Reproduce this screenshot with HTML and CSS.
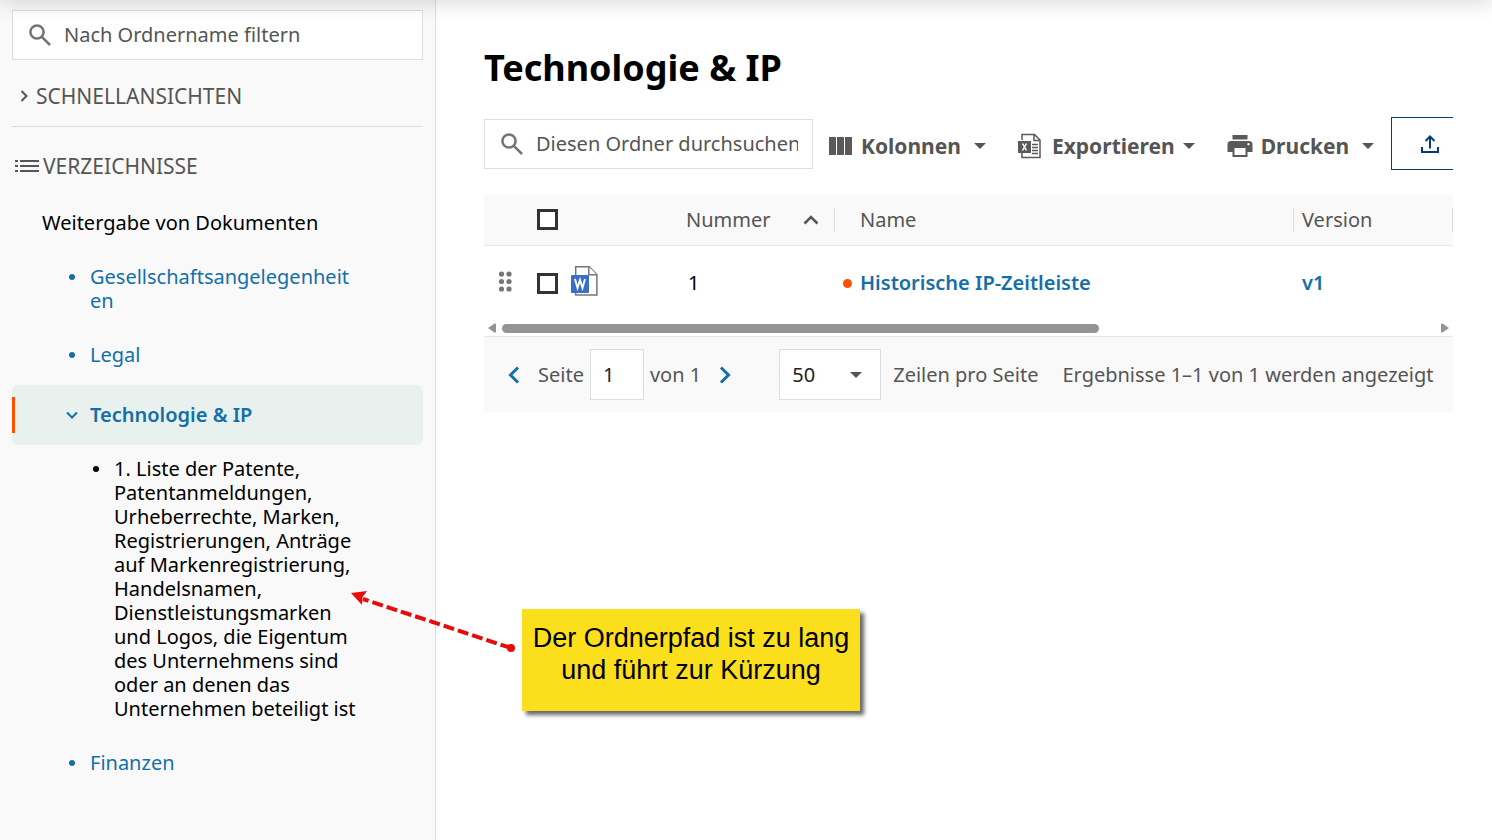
FILE: index.html
```html
<!DOCTYPE html>
<html lang="de">
<head>
    <meta charset="UTF-8">
    <meta name="viewport" content="width=device-width, initial-scale=1.0">
    <title>Technologie &amp; IP</title>
    <link rel="stylesheet" href="styles.css">
</head>
<body>
    <div class="top-shadow"></div>

    <aside class="sidebar">
        <div class="search">
            <svg class="search-icon" viewBox="0 0 24 24" aria-hidden="true"><circle cx="9" cy="9" r="6.6"/><path d="M13.8 13.8L22 22"/></svg>
            <input type="text" placeholder="Nach Ordnername filtern" aria-label="Nach Ordnername filtern">
        </div>

        <button type="button" class="section-title quick-views">
            <svg width="8" height="12" viewBox="0 0 8 12" aria-hidden="true"><path d="M1.5 1L6.5 6L1.5 11"/></svg>
            SCHNELLANSICHTEN
        </button>

        <h2 class="section-title folders-title">
            <svg width="24" height="14" viewBox="0 0 24 14" aria-hidden="true"><path d="M0 2h3M0 7h3M0 12h3M5 2h19M5 7h19M5 12h19"/></svg>
            VERZEICHNISSE
        </h2>

        <nav class="folders">
            <div class="folder root">Weitergabe von Dokumenten</div>
            <ul>
                <li><a class="folder" href="#"><span class="marker"><i class="bullet"></i></span><span class="folder-name">Gesellschaftsangelegenheiten</span></a></li>
                <li><a class="folder" href="#"><span class="marker"><i class="bullet"></i></span><span class="folder-name">Legal</span></a></li>
                <li>
                    <a class="folder active" href="#"><span class="marker"><svg width="12" height="8" viewBox="0 0 12 8" aria-hidden="true"><path d="M1 1.5L6 6.5L11 1.5"/></svg></span><span class="folder-name">Technologie &amp; IP</span></a>
                    <ul>
                        <li><a class="folder nested" href="#"><span class="marker"><i class="bullet"></i></span><span class="folder-name">1. Liste der Patente, Patentanmeldungen, Urheberrechte, Marken, Registrierungen, Anträge auf Markenregistrierung, Handelsnamen, Dienstleistungsmarken und Logos, die Eigentum des Unternehmens sind oder an denen das Unternehmen beteiligt ist</span></a></li>
                    </ul>
                </li>
                <li><a class="folder" href="#"><span class="marker"><i class="bullet"></i></span><span class="folder-name">Finanzen</span></a></li>
            </ul>
        </nav>
    </aside>

    <main class="content">
        <h1>Technologie &amp; IP</h1>

        <div class="toolbar">
            <div class="search">
                <svg class="search-icon" viewBox="0 0 24 24" aria-hidden="true"><circle cx="9" cy="9" r="6.6"/><path d="M13.8 13.8L22 22"/></svg>
                <input type="text" placeholder="Diesen Ordner durchsuchen" aria-label="Diesen Ordner durchsuchen">
            </div>
            <button type="button" class="tool">
                <svg width="24" height="18" viewBox="0 0 24 18" aria-hidden="true"><path d="M0 0h7v18H0zM8 0h7v18H8zM16 0h7v18h-7z"/></svg>
                Kolonnen
                <span class="caret"></span>
            </button>
            <button type="button" class="tool export">
                <svg width="24" height="26" viewBox="0 0 24 26" aria-hidden="true">
                    <path class="line" d="M4 7V1.5h12.5L22 7v17.5H4V20M16 1.5V7.5h6M14 11.5h6M14 14.5h6M14 17.5h6M14 20.5h6"/>
                    <path d="M0 8h13v12H0z"/>
                    <path class="mark" d="M4.5 10.5l4 7M8.5 10.5l-4 7"/>
                </svg>
                Exportieren
                <span class="caret"></span>
            </button>
            <button type="button" class="tool">
                <svg width="26" height="22" viewBox="0 0 26 22" aria-hidden="true"><path fill-rule="evenodd" d="M5.5 0h15v4.5h-15zM4 6h18a3.5 3.5 0 0 1 3.5 3.5V17H20.5v5h-15v-5H.5V9.5A3.5 3.5 0 0 1 4 6zM7.5 13v7h11v-7zM21.5 8a1.2 1.2 0 1 0 .01 0z"/></svg>
                Drucken
                <span class="caret"></span>
            </button>
            <button type="button" class="upload" aria-label="Hochladen">
                <svg width="18" height="18" viewBox="0 0 18 18" aria-hidden="true"><path d="M1 12v5h16v-5M9 13.5V1.5M4.5 6L9 1.5L13.5 6"/></svg>
            </button>
        </div>

        <table class="documents">
            <thead>
                <tr>
                    <th class="col-select"><div class="row-tools"><span class="handle"></span><input type="checkbox" aria-label="Alle auswählen"></div></th>
                    <th class="col-number"><div class="head">Nummer <svg width="16" height="10" viewBox="0 0 16 10" aria-hidden="true"><path d="M1.5 8.5L8 2L14.5 8.5"/></svg></div></th>
                    <th class="col-name"><div class="head">Name</div></th>
                    <th class="col-version"><div class="head">Version</div></th>
                </tr>
            </thead>
            <tbody>
                <tr>
                    <td>
                        <div class="row-tools">
                            <svg class="handle" viewBox="0 0 42 21" aria-hidden="true"><g fill="#757575"><circle cx="17.5" cy="3" r="2.6"/><circle cx="25" cy="3" r="2.6"/><circle cx="17.5" cy="10.5" r="2.6"/><circle cx="25" cy="10.5" r="2.6"/><circle cx="17.5" cy="18" r="2.6"/><circle cx="25" cy="18" r="2.6"/></g></svg>
                            <input type="checkbox" aria-label="Historische IP-Zeitleiste auswählen">
                            <svg width="27" height="30" viewBox="0 0 27 30" aria-hidden="true">
                                <path fill="#fff" stroke="#757575" stroke-width="1.5" d="M4.7 .8h13.5l7.7 7.7v20.6H4.7z"/>
                                <path fill="#fff" stroke="#757575" stroke-width="1.5" d="M17.8 .8v7.9h8.1"/>
                                <rect y="9" width="18" height="18" rx="1" fill="#3a6fc7"/>
                                <path fill="none" stroke="#fff" stroke-width="1.9" d="M4 13L6.5 22L9 14L11.5 22L14 13"/>
                            </svg>
                        </div>
                    </td>
                    <td class="number">1</td>
                    <td><div class="doc"><i class="new-dot"></i><a href="#">Historische IP-Zeitleiste</a></div></td>
                    <td class="version"><a href="#">v1</a></td>
                </tr>
            </tbody>
        </table>
        <div class="scrollbar">
            <svg width="8" height="10" viewBox="0 0 8 10" aria-hidden="true"><path d="M0 5L6.5 .5Q8 0 8 1.5v7Q8 10 6.5 9.5z"/></svg>
            <div class="track"><div class="thumb"></div></div>
            <svg width="8" height="10" viewBox="0 0 8 10" aria-hidden="true"><path d="M8 5L1.5 .5Q0 0 0 1.5v7Q0 10 1.5 9.5z"/></svg>
        </div>

        <div class="pager">
            <button type="button" class="page-arrow" aria-label="Vorherige Seite"><svg width="12" height="18" viewBox="0 0 12 18" aria-hidden="true"><path d="M10 1.5L2.5 9L10 16.5"/></svg></button>
            <label for="page">Seite</label>
            <input type="text" id="page" class="page-input" value="1">
            <span class="page-total">von 1</span>
            <button type="button" class="page-arrow" aria-label="Nächste Seite"><svg width="12" height="18" viewBox="0 0 12 18" aria-hidden="true"><path d="M2 1.5L9.5 9L2 16.5"/></svg></button>
            <div class="rows-select">
                <select id="rows"><option>50</option></select>
                <span class="caret"></span>
            </div>
            <label for="rows">Zeilen pro Seite</label>
            <span class="results">Ergebnisse 1–1 von 1 werden angezeigt</span>
        </div>
    </main>

    <!-- Hinweis -->
    <svg class="arrow" width="170" height="66" viewBox="0 0 170 66" aria-hidden="true">
        <path d="M161 57L13 8" fill="none" stroke="#ea0a0a" stroke-width="4" stroke-dasharray="11 4"/>
        <circle cx="161" cy="57" r="4" fill="#ea0a0a"/>
        <path d="M1 2L17 0L12.5 6L12 14z" fill="#ea0a0a"/>
    </svg>
    <div class="callout">Der Ordnerpfad ist zu lang und führt zur Kürzung</div>
</body>
</html>
```
FILE: styles.css
```css
* {
    box-sizing: border-box;
}
body {
    margin: 0;
    display: flex;
    min-height: 100vh;
    position: relative;
    background-color: #fff;
    color: #555;
    font-family: 'Noto Sans', sans-serif;
    font-size: 20px;
    line-height: 24px;
}
button, input, select {
    font: inherit;
    color: inherit;
}
button {
    padding: 0;
    border: none;
    background: none;
    cursor: pointer;
}
a {
    color: #146fa8;
    text-decoration: none;
}
svg {
    flex: none;
}
ul {
    margin: 0;
    padding: 0;
    list-style: none;
}
.top-shadow {
    position: absolute;
    top: -10px;
    left: 0;
    right: 0;
    height: 10px;
    box-shadow: 0 0 20px rgba(0, 0, 0, 0.25);
}

/* Search fields */
.search {
    display: flex;
    align-items: center;
    height: 50px;
    padding: 0 14px 0 15px;
    border: 1px solid #ddd;
    background-color: #fff;
}
.search-icon {
    width: 24px;
    height: 24px;
    fill: none;
    stroke: #757575;
    stroke-width: 2.5;
}
.search input {
    flex: 1;
    min-width: 0;
    margin-left: 12px;
    padding: 0;
    border: none;
    outline: none;
    background: none;
}
.search input::placeholder {
    color: #555;
    opacity: 1;
}

/* Sidebar */
.sidebar {
    flex: none;
    width: 436px;
    padding: 10px 12px;
    border-right: 1px solid #ddd;
    background-color: #f9f9f9;
}
.section-title {
    display: flex;
    align-items: center;
    width: 100%;
    margin: 0;
    font-size: 21px;
    font-weight: 400;
}
.section-title svg {
    fill: none;
    stroke: #555;
    stroke-width: 2;
}
.quick-views {
    gap: 8px;
    padding: 24px 8px 18px;
    border-bottom: 1px solid #ddd;
}
.folders-title {
    gap: 4px;
    padding: 27px 3px 21px;
}
.folder {
    display: flex;
    padding: 12px 68px 18px 48px;
}
.folder-name {
    flex: 1;
    min-width: 0;
    overflow-wrap: anywhere;
}
.marker {
    display: flex;
    align-items: center;
    justify-content: center;
    width: 24px;
    height: 24px;
    margin-right: 6px;
}
.marker svg {
    fill: none;
    stroke: #146fa8;
    stroke-width: 2;
}
.bullet {
    width: 6px;
    height: 6px;
    border-radius: 50%;
    background-color: currentColor;
}
.root {
    padding-left: 30px;
    color: #000;
}
.nested {
    padding-right: 60px;
    padding-left: 72px;
    color: #000;
}
.active {
    position: relative;
    padding-top: 18px;
    border-radius: 6px;
    background-color: #e8f1ee;
    font-weight: 600;
}
.active::before {
    content: '';
    position: absolute;
    left: 0;
    top: 12px;
    bottom: 12px;
    width: 3px;
    background-color: #ff4f00;
}

/* Content */
.content {
    flex: 1;
    min-width: 0;
    padding: 44px 39px 0 48px;
}
h1 {
    margin: 0;
    color: #000;
    font-size: 36px;
    line-height: 48px;
    font-weight: 700;
}
.toolbar {
    display: flex;
    align-items: center;
    gap: 32px;
    margin-top: 25px;
    overflow: hidden;
}
.toolbar .search {
    flex: none;
    width: 329px;
    margin-right: -16px;
}
.tool {
    display: flex;
    flex: none;
    align-items: center;
    gap: 8px;
    padding-top: 5px;
    font-size: 21px;
    font-weight: 700;
}
.tool svg {
    fill: #5a5a5a;
}
.tool svg .line {
    fill: none;
    stroke: #5a5a5a;
    stroke-width: 1.5;
}
.tool svg .mark {
    stroke: #fff;
    stroke-width: 1.5;
}
.caret {
    border: 6px solid transparent;
    border-top-color: #555;
    border-bottom: none;
}
.tool .caret {
    margin-left: 5px;
}
.export svg {
    margin-right: 2px;
}
.export .caret {
    margin-left: 0;
}
.upload {
    display: flex;
    flex: none;
    align-items: center;
    justify-content: center;
    width: 78px;
    height: 53px;
    margin-left: -15px;
    border: 1px solid #003d7d;
}
.upload svg {
    fill: none;
    stroke: #003d7d;
    stroke-width: 2;
}

/* Table */
.documents {
    width: 100%;
    margin-top: 25px;
    border-collapse: collapse;
    table-layout: fixed;
}
.documents th {
    height: 50px;
    padding: 0;
    border-bottom: 1px solid #e8e8e8;
    background-color: #f9f9f9;
    font-weight: 400;
    text-align: left;
}
.documents td {
    height: 76px;
    padding: 0;
    color: #000;
}
.documents a {
    font-weight: 600;
}
.col-select {
    width: 194px;
}
.col-number {
    width: 157px;
}
.col-version {
    width: 159px;
}
.head {
    display: flex;
    align-items: center;
    justify-content: space-between;
    padding: 0 15px 0 8px;
}
.col-name .head {
    padding-left: 25px;
}
.col-number .head, .col-name .head, .col-version .head {
    border-right: 1px solid #ddd;
}
.head svg {
    fill: none;
    stroke: #555;
    stroke-width: 2.5;
}
.row-tools {
    display: flex;
    align-items: center;
}
.row-tools svg {
    margin-bottom: 4px;
}
.handle {
    width: 42px;
    height: 21px;
}
.row-tools input {
    appearance: none;
    width: 21px;
    height: 21px;
    margin: 0 13px 0 11px;
    border: 3px solid #333;
    background-color: #fff;
}
.documents .number {
    padding-left: 10px;
}
.doc {
    display: flex;
    align-items: center;
    gap: 8px;
    padding-left: 8px;
}
.new-dot {
    width: 9px;
    height: 9px;
    border-radius: 50%;
    background-color: #ff4f00;
}
.documents .version {
    padding-left: 8px;
}
.scrollbar {
    display: flex;
    align-items: center;
    gap: 6px;
    height: 14px;
    margin-bottom: 1px;
    padding: 0 4px;
}
.scrollbar svg {
    fill: #949494;
}
.track {
    flex: 1;
}
.thumb {
    width: 64%;
    height: 9px;
    border-radius: 5px;
    background-color: #949494;
}

/* Pager */
.pager {
    display: flex;
    align-items: center;
    height: 76px;
    padding: 0 12px 0 24px;
    border-top: 1px solid #e8e8e8;
    background-color: #f9f9f9;
    white-space: nowrap;
}
.page-arrow {
    display: flex;
}
.page-arrow svg {
    fill: none;
    stroke: #146fa8;
    stroke-width: 3;
}
.pager .page-arrow + label {
    margin-left: 18px;
}
.page-input {
    flex: none;
    width: 54px;
    height: 51px;
    margin: 0 6px;
    padding: 0 12px;
    border: 1px solid #ddd;
    background-color: #fff;
    color: #222;
}
.page-total {
    margin-right: 18px;
}
.rows-select {
    display: flex;
    flex: none;
    align-items: center;
    width: 102px;
    height: 51px;
    margin: 0 12px 0 48px;
    padding: 0 18px 0 12px;
    border: 1px solid #ddd;
    background-color: #fff;
    color: #222;
}
.rows-select select {
    appearance: none;
    flex: 1;
    min-width: 0;
    padding: 0;
    border: none;
    outline: none;
    background: none;
}
.results {
    margin-left: 24px;
}

/* Annotation over the page */
.arrow {
    position: absolute;
    left: 350px;
    top: 591px;
}
.callout {
    position: absolute;
    left: 522px;
    top: 609px;
    width: 338px;
    height: 102px;
    padding-top: 13px;
    background-color: #fcdf1c;
    box-shadow: 4px 4px 4px rgba(0, 0, 0, 0.6);
    color: #000;
    font-family: 'Liberation Sans', Arial, sans-serif;
    font-size: 27px;
    line-height: 32px;
    text-align: center;
}
```
